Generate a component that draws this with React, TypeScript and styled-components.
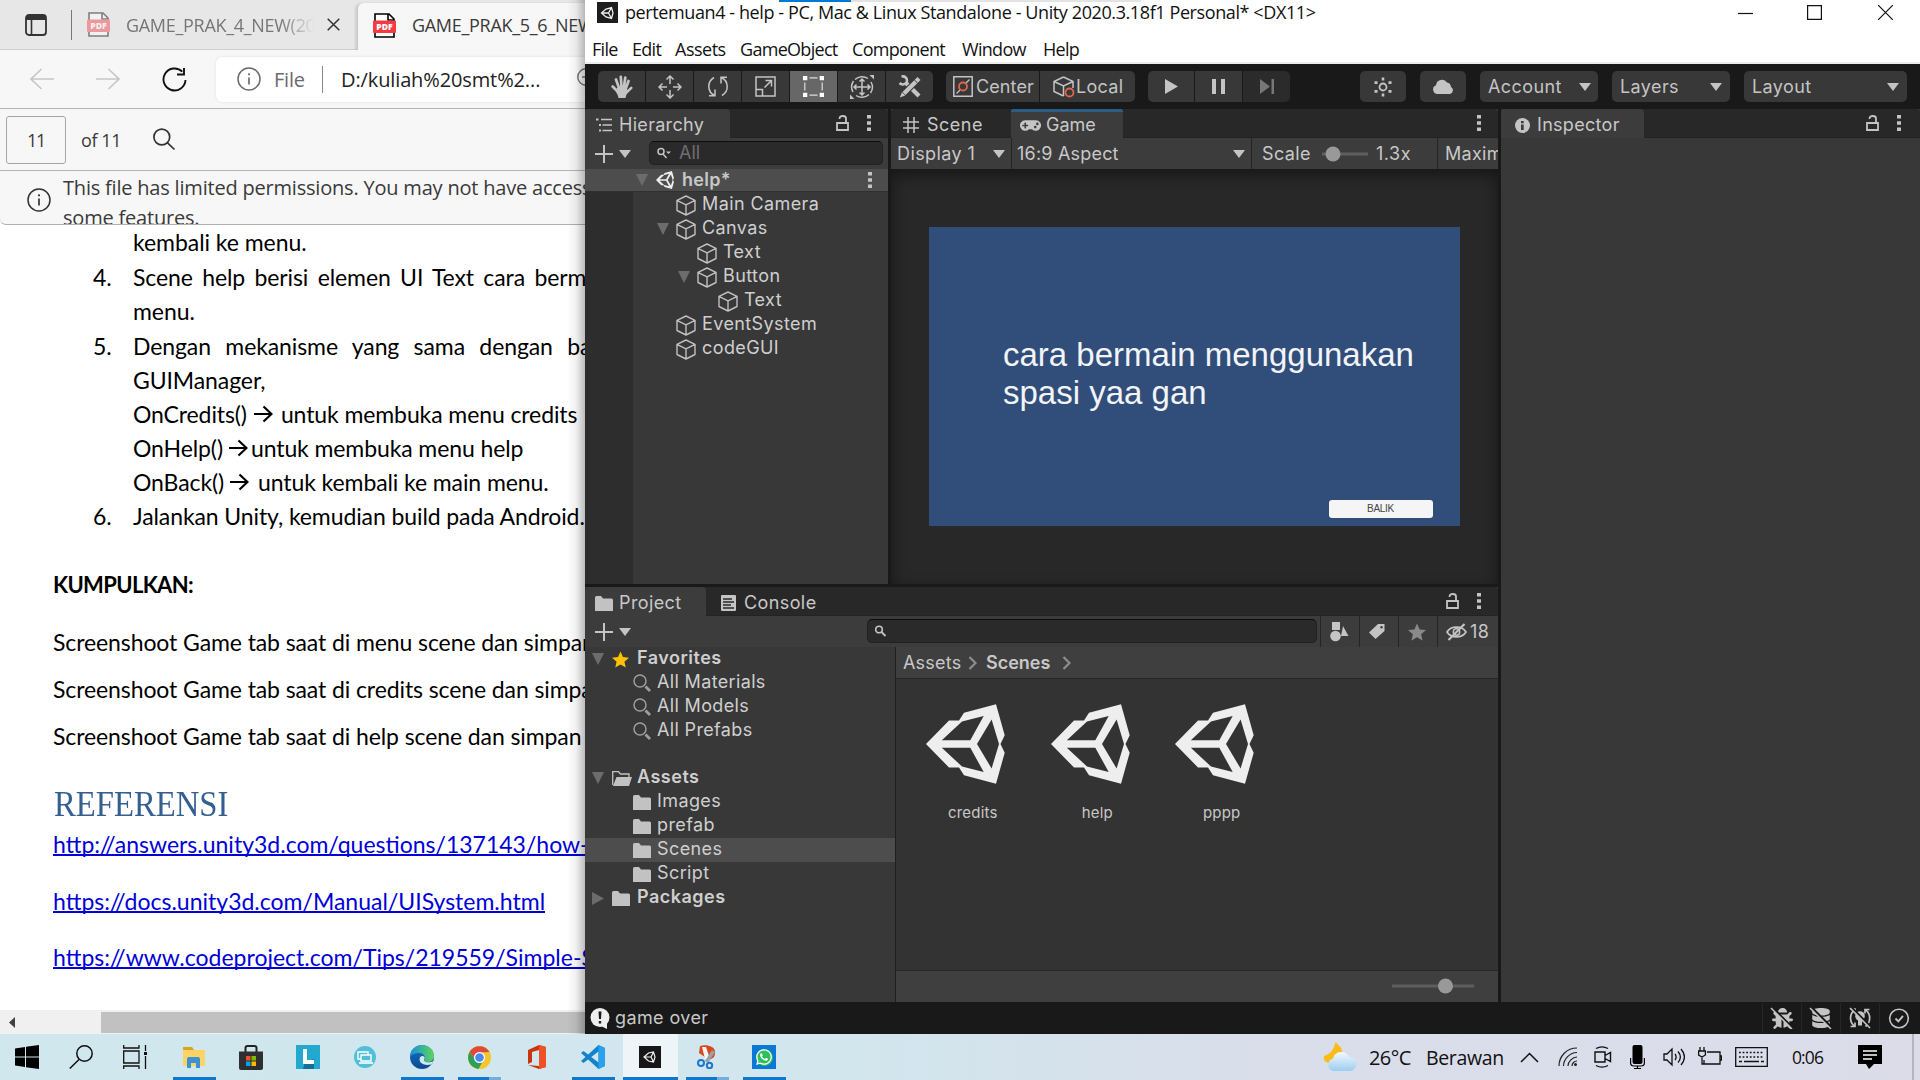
import React from "react";
import styled, { createGlobalStyle, css } from "styled-components";
import { FaBug, FaDatabase, FaGamepad, FaWhatsapp } from "react-icons/fa";

const SEGOE = '"Open Sans", "Noto Sans", sans-serif';
const INTER = 'Inter, Roboto, sans-serif';
const CALIBRI = 'Lato, "Open Sans", sans-serif';

const Global = createGlobalStyle`
  * { box-sizing: border-box; }
  html, body { margin: 0; padding: 0; background: #fff; overflow: hidden; }
  svg { display: block; flex: none; }
`;

/* ---------- shared pieces ---------- */

const Desktop = styled.div`
  width: 1920px;
  height: 1080px;
  display: grid;
  grid-template-rows: 1034px 46px;
  overflow: hidden;
`;

const Workspace = styled.div`
  display: grid;
  grid-template-columns: 585px 1335px;
  min-height: 0;
`;

const Label = styled.span<{ $w?: number; $ls?: number; $size?: number; $bold?: boolean; $ml?: number; $color?: string; $up?: number }>`
  flex: none;
  white-space: nowrap;
  display: block;
  ${(p) => p.$w !== undefined && css`width: ${p.$w}px;`}
  ${(p) => p.$size && css`font-size: ${p.$size}px;`}
  ${(p) => p.$bold && css`font-weight: 600;`}
  ${(p) => p.$color && css`color: ${p.$color};`}
  letter-spacing: ${(p) => p.$ls ?? 0}px;
  margin-left: ${(p) => p.$ml ?? 0}px;
  margin-bottom: ${(p) => p.$up ?? 0}px;
`;

const Gap = styled.i<{ $w: number }>`
  flex: none;
  width: ${(p) => p.$w}px;
`;

type GlyphProps = { w: number; h: number; vb?: string; children: React.ReactNode };
const Glyph = ({ w, h, vb, children }: GlyphProps) => (
  <svg width={w} height={h} viewBox={vb ?? `0 0 ${w} ${h}`} preserveAspectRatio="none" fill="none">
    {children}
  </svg>
);

/* ---------- browser ---------- */

const Browser = styled.section`
  display: flex;
  flex-direction: column;
  width: 585px;
  height: 1034px;
  overflow: hidden;
  background: #fff;
  font-family: ${SEGOE};
  position: relative;
  &::after {
    content: "";
    position: absolute;
    inset: 0 0 0 auto;
    width: 18px;
    background: linear-gradient(to right, rgba(0, 0, 0, 0), rgba(0, 0, 0, 0.06) 50%, rgba(0, 0, 0, 0.26));
  }
`;

const TabStrip = styled.div`
  height: 50px;
  flex: none;
  display: flex;
  background: #e7e7e7;
`;

const IdleTabs = styled.div`
  width: 357px;
  height: 50px;
  display: flex;
  align-items: center;
  padding: 0 0 0 25px;
  border-bottom: 1px solid #cfcfcf;
  color: #767676;
  font-size: 18px;
`;

const TabTitle = styled.span<{ $w: number; $fade?: boolean; $ls: number }>`
  width: ${(p) => p.$w}px;
  flex: none;
  overflow: hidden;
  white-space: nowrap;
  letter-spacing: ${(p) => p.$ls}px;
  ${(p) => p.$fade && css`mask-image: linear-gradient(to right, #000 82%, transparent);`}
`;

const ActiveTab = styled.div`
  flex: 1;
  min-width: 0;
  margin-top: 3px;
  padding: 0 0 3px 15px;
  display: flex;
  align-items: center;
  background: #f7f7f7;
  border-radius: 6px 0 0 0;
  border-left: 1px solid #c9c9c9;
  color: #3a3a3a;
  font-size: 18px;
  box-shadow: -2px 0 2px rgba(0, 0, 0, 0.1);
`;

const VLine = styled.i<{ $h: number; $ml?: number; $mr?: number; $c?: string; $w?: number }>`
  flex: none;
  width: ${(p) => p.$w ?? 1}px;
  height: ${(p) => p.$h}px;
  margin: 0 ${(p) => p.$mr ?? 0}px 0 ${(p) => p.$ml ?? 0}px;
  background: ${(p) => p.$c ?? "#777"};
`;

const NavRow = styled.div`
  height: 59px;
  flex: none;
  display: flex;
  align-items: center;
  padding-left: 30px;
  background: #f7f7f7;
  border-bottom: 1px solid #b4b4b4;
`;

const Address = styled.div`
  height: 45px;
  flex: 1;
  margin-left: 29px;
  padding-left: 21px;
  display: flex;
  align-items: center;
  background: #fff;
  border-radius: 6px 0 0 6px;
  box-shadow: 0 0 3px rgba(0, 0, 0, 0.1);
  font-size: 20px;
  color: #6b6b6b;
  overflow: hidden;
`;

const PdfBar = styled.div`
  height: 62px;
  flex: none;
  display: flex;
  align-items: center;
  padding-left: 6px;
  background: #f7f7f7;
  border-bottom: 1px solid #b4b4b4;
  font-size: 18px;
  color: #3a3a3a;
`;

const PageInput = styled.div`
  width: 60px;
  height: 48px;
  border: 1px solid #a5a5a5;
  border-radius: 3px;
  display: flex;
  align-items: center;
  justify-content: center;
  letter-spacing: -1.2px;
`;

const Notice = styled.div`
  height: 54px;
  flex: none;
  display: flex;
  align-items: flex-start;
  padding-left: 27px;
  background: #f7f7f7;
  border-bottom: 1px solid #b0b0b0;
  border-radius: 0 0 0 6px;
  overflow: hidden;
  color: #3a3a3a;
  font-size: 20px;
  line-height: 30px;
`;

const NoticeIcon = styled.div`
  flex: none;
  padding-top: 17px;
  width: 36px;
`;

const NoticeText = styled.div`
  padding-top: 2px;
  white-space: nowrap;
  letter-spacing: -0.2px;
`;

const Page = styled.article`
  flex: 1;
  min-height: 0;
  overflow: hidden;
  background: #fff;
  color: #000;
  font-family: ${CALIBRI};
  font-size: 23px;
`;

const Line = styled.div<{ $h: number; $x: number; $ls: number; $ws?: number; $bold?: boolean }>`
  height: ${(p) => p.$h}px;
  line-height: ${(p) => p.$h}px;
  padding-left: ${(p) => p.$x}px;
  display: flex;
  white-space: pre;
  letter-spacing: ${(p) => p.$ls}px;
  word-spacing: ${(p) => p.$ws ?? 0}px;
  font-weight: ${(p) => (p.$bold ? 700 : 400)};
  ${(p) => p.$bold && css`font-size: 22px;`}
`;

const ItemNumber = styled.span`
  width: 40px;
  flex: none;
`;

const ArrowMark = styled.span<{ $l: number; $r: number }>`
  display: flex;
  align-items: center;
  margin: 0 ${(p) => p.$r}px 0 ${(p) => p.$l}px;
`;

const Heading = styled.h1`
  margin: 38px 0 0 54px;
  font: 400 36px/44px "Liberation Serif", serif;
  transform: scaleX(0.908);
  transform-origin: left;
  color: #365f91;
  height: 45px;
  padding-top: 1px;
`;

const LinkRow = styled.div<{ $mt: number }>`
  height: 30px;
  margin: ${(p) => p.$mt}px 0 0 53px;
  display: flex;
`;

const Link = styled.a<{ $ls: number }>`
  color: #0000d8;
  height: 26px;
  line-height: 28px;
  white-space: nowrap;
  border-bottom: 2px solid #0000d8;
  letter-spacing: ${(p) => p.$ls}px;
`;

const ScrollBar = styled.div`
  height: 24px;
  flex: none;
  display: flex;
  align-items: center;
  background: #f0f0f0;
  padding-left: 9px;
`;

const Thumb = styled.div`
  margin-left: 86px;
  flex: 1;
  height: 21px;
  background: #c1c1c1;
`;

const PdfIcon = ({ dim }: { dim?: boolean }) => (
  <svg width="23" height="25" viewBox="0 0 23 25" opacity={dim ? 0.45 : 1}>
    <path d="M2 1h14l5 5v18H2z" fill="#fff" stroke="#000" strokeWidth="1.6" />
    <path d="M15 1v6h6" fill="none" stroke="#000" strokeWidth="1.6" />
    <rect x="0" y="7.5" width="23" height="12.5" rx="1" fill="#f23b42" />
    <text x="11.5" y="17" fontFamily="Open Sans" fontSize="8.6" fontWeight="800" fill="#fff" textAnchor="middle">PDF</text>
  </svg>
);

const InfoCircle = ({ color }: { color: string }) => (
  <Glyph w={24} h={24}>
    <circle cx="12" cy="12" r="11" stroke={color} strokeWidth="1.5" />
    <path d="M12 10.5v7" stroke={color} strokeWidth="1.7" />
    <circle cx="12" cy="7.3" r="1.1" fill={color} />
  </Glyph>
);

const DocArrow = () => (
  <Glyph w={19} h={18}>
    <path d="M0 9h17M9.5 1.5L17.5 9L9.5 16.5" stroke="#000" strokeWidth="2.2" />
  </Glyph>
);

const BrowserWindow = () => (
  <Browser>
    <TabStrip>
      <IdleTabs>
        <Glyph w={22} h={22}>
          <rect x="1" y="1" width="20" height="20" rx="3" stroke="#333" strokeWidth="1.8" />
          <path d="M1 6V4a3 3 0 0 1 3-3h14a3 3 0 0 1 3 3v2z" fill="#333" />
          <path d="M6.5 6v15" stroke="#333" strokeWidth="1.6" />
        </Glyph>
        <VLine $h={30} $ml={24} $mr={15} />
        <PdfIcon dim />
        <Gap $w={16} />
        <TabTitle $w={188} $fade $ls={-0.3}>GAME_PRAK_4_NEW(202</TabTitle>
        <Gap $w={13} />
        <Glyph w={13} h={13}><path d="M.7 .7l11.6 11.6M12.3 .7L.7 12.3" stroke="#333" strokeWidth="1.5" /></Glyph>
      </IdleTabs>
      <ActiveTab>
        <PdfIcon />
        <Gap $w={16} />
        <TabTitle $w={173} $ls={-0.3}>GAME_PRAK_5_6_NEW</TabTitle>
      </ActiveTab>
    </TabStrip>
    <NavRow>
      <Glyph w={24} h={22}><path d="M24 11H1M11.5 1L1 11l10.500 10" stroke="#c6c6c6" strokeWidth="1.6" /></Glyph>
      <Gap $w={42} />
      <Glyph w={24} h={22}><path d="M0 11h23M12.500 1L23 11L12.500 21" stroke="#c6c6c6" strokeWidth="1.6" /></Glyph>
      <Gap $w={42} />
      <Glyph w={25} h={25}>
        <path d="M23.500 13a11 11 0 1 1-3.200-8.300M22 1v6.500h-7" stroke="#111" strokeWidth="1.9" />
      </Glyph>
      <Address>
        <InfoCircle color="#6b6b6b" />
        <Label $w={48} $ml={13} $ls={-0.2}>File</Label>
        <VLine $h={27} $mr={18} $c="#888" />
        <Label $w={236} $ls={-0.12} $color="#222">D:/kuliah%20smt%2...</Label>
        <Glyph w={22} h={22}><circle cx="9" cy="9" r="8.2" stroke="#777" strokeWidth="1.5" /><path d="M5 9h8" stroke="#777" strokeWidth="1.5" /></Glyph>
      </Address>
    </NavRow>
    <PdfBar>
      <PageInput>11</PageInput>
      <Label $w={72} $ml={15} $ls={-0.4}>of 11</Label>
      <Glyph w={23} h={23}><circle cx="8.800" cy="9" r="7.900" stroke="#333" strokeWidth="1.7" /><path d="M14.300 14.600L21.500 21.500" stroke="#333" strokeWidth="1.700" /></Glyph>
    </PdfBar>
    <Notice>
      <NoticeIcon><InfoCircle color="#333" /></NoticeIcon>
      <NoticeText>
        This file has limited permissions. You may not have access to
        <br />
        some features.
      </NoticeText>
    </Notice>
    <Page>
      <Line $h={35} $x={133} $ls={-0.05}>kembali ke menu.</Line>
      <Line $h={34} $x={93} $ls={-0.1} $ws={3.6}><ItemNumber>4.</ItemNumber>Scene help berisi elemen UI Text cara bermain</Line>
      <Line $h={35} $x={133} $ls={-0.05}>menu.</Line>
      <Line $h={34} $x={93} $ls={-0.1} $ws={8.6}><ItemNumber>5.</ItemNumber>Dengan mekanisme yang sama dengan bab</Line>
      <Line $h={34} $x={133} $ls={-0.1}>GUIManager,</Line>
      <Line $h={34} $x={133} $ls={-0.1}>OnCredits()<ArrowMark $l={7} $r={8}><DocArrow /></ArrowMark>untuk membuka menu credits</Line>
      <Line $h={34} $x={133} $ls={-0.1}>OnHelp()<ArrowMark $l={6} $r={3}><DocArrow /></ArrowMark>untuk membuka menu help</Line>
      <Line $h={34} $x={133} $ls={-0.1}>OnBack()<ArrowMark $l={6} $r={9}><DocArrow /></ArrowMark>untuk kembali ke main menu.</Line>
      <Line $h={35} $x={93} $ls={-0.1}><ItemNumber>6.</ItemNumber>Jalankan Unity, kemudian build pada Android.</Line>
      <Line $h={102} $x={53} $ls={-0.65} $bold>KUMPULKAN:</Line>
      <Line $h={13} $x={53} $ls={-0.1}>Screenshoot Game tab saat di menu scene dan simpan</Line>
      <Line $h={80} $x={53} $ls={-0.1}>Screenshoot Game tab saat di credits scene dan simpan</Line>
      <Line $h={14} $x={53} $ls={-0.1}>Screenshoot Game tab saat di help scene dan simpan</Line>
      <Heading>REFERENSI</Heading>
      <LinkRow $mt={4}><Link $ls={0}>http://answers.unity3d.com/questions/137143/how-to</Link></LinkRow>
      <LinkRow $mt={27}><Link $ls={0}>https://docs.unity3d.com/Manual/UISystem.html</Link></LinkRow>
      <LinkRow $mt={26}><Link $ls={0}>https://www.codeproject.com/Tips/219559/Simple-Si</Link></LinkRow>
    </Page>
    <ScrollBar>
      <Glyph w={6} h={11}><path d="M6 0v11L0 5.500z" fill="#404040" /></Glyph>
      <Thumb />
    </ScrollBar>
  </Browser>
);

/* ---------- Unity ---------- */

const Unity = styled.section`
  display: grid;
  grid-template-rows: 62px 47px 893px 32px;
  background: #191919;
  color: #c8c8c8;
  font-family: ${INTER};
  font-size: 18px;
  line-height: 22px;
  min-width: 0;
`;

const Chrome = styled.header`
  background: #fff;
  color: #111;
  font-family: ${SEGOE};
  font-size: 18px;
  line-height: 24px;
`;

const TopEdge = styled.div`
  height: 2px;
  display: flex;
  padding-left: 194px;
`;

const EdgeBar = styled.i<{ $w: number; $c: string }>`
  width: ${(p) => p.$w}px;
  background: ${(p) => p.$c};
`;

const TitleRow = styled.div`
  height: 20px;
  display: flex;
  align-items: center;
  padding-left: 12px;
`;

const MenuRow = styled.nav`
  height: 24px;
  margin-top: 15px;
  padding-left: 7px;
  display: flex;
`;

const Toolbar = styled.div`
  border-top: 2px solid #ececec;
  padding: 7px 0 0 13px;
  display: flex;
`;

const ButtonGroup = styled.div<{ $ml?: number }>`
  height: 31px;
  display: flex;
  gap: 1px;
  margin-left: ${(p) => p.$ml ?? 0}px;
  border-radius: 5px;
  overflow: hidden;
`;

const ToolButton = styled.div<{ $w: number; $on?: boolean; $dim?: boolean; $left?: number }>`
  width: ${(p) => p.$w}px;
  height: 31px;
  display: flex;
  align-items: center;
  justify-content: ${(p) => (p.$left === undefined ? "center" : "flex-start")};
  padding-left: ${(p) => p.$left ?? 0}px;
  background: ${(p) => (p.$on ? "#676767" : p.$dim ? "#2b2b2b" : "#383838")};
  color: #c4c4c4;
`;

const Panels = styled.div`
  display: grid;
  grid-template-columns: 913px 419px;
  column-gap: 3px;
`;

const LeftColumn = styled.div`
  display: grid;
  grid-template-rows: 475px 415px;
  row-gap: 3px;
`;

const TopPair = styled.div`
  display: grid;
  grid-template-columns: 303px 607px;
  column-gap: 3px;
`;

const Panel = styled.section`
  display: flex;
  flex-direction: column;
  min-width: 0;
  min-height: 0;
  background: #383838;
  overflow: hidden;
`;

const PanelTabs = styled.div`
  height: 29px;
  flex: none;
  display: flex;
  background: #282828;
  border-radius: 4px 4px 0 0;
  border-bottom: 1px solid #232323;
`;

const PanelTab = styled.div<{ $w: number; $l: number; $active?: boolean; $focus?: boolean }>`
  width: ${(p) => p.$w}px;
  height: 29px;
  flex: none;
  display: flex;
  align-items: center;
  padding-left: ${(p) => p.$l}px;
  padding-top: ${(p) => (p.$focus ? 0 : 3)}px;
  background: ${(p) => (p.$active ? "#3c3c3c" : "transparent")};
  border-top: ${(p) => (p.$focus ? "3px solid #2c5d87" : "0")};
  border-radius: ${(p) => (p.$focus ? "2px 2px 0 0" : "4px 4px 0 0")};
`;

const TabTools = styled.div<{ $r: number }>`
  margin-left: auto;
  display: flex;
  align-items: center;
  gap: 18px;
  padding: 0 ${(p) => p.$r}px 0 0;
`;

const PanelBar = styled.div<{ $l?: number }>`
  height: 31px;
  flex: none;
  display: flex;
  align-items: center;
  padding-left: ${(p) => p.$l ?? 0}px;
  background: #3c3c3c;
`;

const SearchBox = styled.div<{ $w: number; $ml: number }>`
  width: ${(p) => p.$w}px;
  height: 24px;
  margin: 0 0 1px ${(p) => p.$ml}px;
  display: flex;
  flex: none;
  align-items: center;
  padding-left: 7px;
  background: #2a2a2a;
  border: 1px solid #212121;
  border-top-color: #0d0d0d;
  border-radius: 5px;
  color: #6f6f6f;
`;

const SceneRow = styled.div`
  height: 23px;
  flex: none;
  display: flex;
  align-items: center;
  padding-left: 51px;
  background: #4d4d4d;
  border-bottom: 1px solid #303030;
`;

const HierarchyBody = styled.div`
  flex: 1;
  padding-left: 48px;
  background: #2d2d2d;
`;

const Tree = styled.div`
  height: 100%;
  background: #383838;
  padding-top: 1px;
`;

const TreeRow = styled.div<{ $l: number; $sel?: boolean }>`
  height: 24px;
  display: flex;
  align-items: center;
  padding-left: ${(p) => p.$l}px;
  background: ${(p) => (p.$sel ? "#4d4d4d" : "transparent")};
  color: #cfcfcf;
`;

const TreeSpacer = styled.div`
  height: 23px;
`;

const Slot = styled.span<{ $w: number }>`
  width: ${(p) => p.$w}px;
  flex: none;
  display: flex;
  align-items: center;
`;

const GameView = styled.div`
  flex: 1;
  padding: 58px 0 0 38px;
  background: #282828;
  box-shadow: inset 0 6px 16px rgba(0, 0, 0, 0.45);
`;

const Stage = styled.div`
  width: 531px;
  height: 299px;
  display: flex;
  flex-direction: column;
  justify-content: space-between;
  padding: 109px 27px 8px 74px;
  background: #314d79;
`;

const StageText = styled.p`
  margin: 0;
  font: 400 33px/38px "Liberation Sans", Arial, sans-serif;
  color: #f2f4f8;
  white-space: nowrap;
`;

const StageButton = styled.div`
  width: 104px;
  height: 18px;
  align-self: flex-end;
  display: flex;
  align-items: center;
  justify-content: center;
  border-radius: 3px;
  background: #f5f5f5;
  color: #444;
  font: 400 10px/12px "Liberation Sans", Arial, sans-serif;
  letter-spacing: -0.3px;
  padding-right: 1px;
`;

const ProjectBody = styled.div`
  flex: 1;
  display: grid;
  grid-template-columns: 310px 602px;
  min-height: 0;
`;

const Browse = styled.div`
  border-left: 1px solid #1f1f1f;
  display: grid;
  grid-template-rows: 32px 292px 31px;
  background: #333;
  width: 603px;
`;

const Crumbs = styled.div`
  display: flex;
  align-items: center;
  padding-left: 7px;
  background: #3f3f3f;
  border-bottom: 1px solid #262626;
`;

const Assets = styled.div`
  display: flex;
  gap: 45px;
  padding: 25px 0 0 30px;
  border-bottom: 1px solid #272727;
`;

const Asset = styled.div`
  width: 79.500px;
  font-size: 15px;
  line-height: 18px;
  text-align: center;
`;

const AssetName = styled.div`
  margin-top: 20px;
  padding-left: 14px;
  letter-spacing: 0.2px;
`;

const ZoomFooter = styled.div`
  display: flex;
  align-items: center;
  justify-content: flex-end;
  padding: 0 24px 2px 0;
  background: #3f3f3f;
`;

const StatusBar = styled.footer`
  display: flex;
  align-items: center;
  padding-left: 5px;
  background: #191919;
`;

const StatusIcon = styled.div`
  width: 39px;
  height: 30px;
  display: flex;
  align-items: center;
  justify-content: center;
  border-left: 1px solid #262626;
  color: #c4c4c4;
  position: relative;
`;

const Slash = styled.svg`
  position: absolute;
  left: 7px;
  top: 4px;
`;

const UnityMark = ({ w, h, color = "#eee" }: { w: number; h: number; color?: string }) => (
  <Glyph w={w} h={h} vb="0 0 79 80">
    <path
      fill={color}
      fillRule="evenodd"
      d="M0 40L23 16.500H33L38 8.700L70 .3L78.700 31.300L74.500 40L78.700 48.700L70 79.700L38 71.300L33 63.500H23zM15.800 36.300H44.300L57.700 12L36 17.500zM15.800 43.700L36 62.500L57.700 68L44.300 43.700zM51 40L65.600 64.500L73 40L65.600 15.500z"
    />
  </Glyph>
);

const TitleIcon = () => (
  <Glyph w={21} h={21}>
    <rect width="21" height="21" fill="#1d1d1d" />
    <path d="M4.500 11L9 7L14.500 5.500L16 11L14.500 16.500L9 15zM4.500 11H11.500M11.500 11L14.500 5.500M11.500 11L14.500 16.500" stroke="#eee" strokeWidth="1.300" />
  </Glyph>
);

const Cube = () => (
  <Glyph w={20} h={21}>
    <path d="M10 1L19 5.300V15.500L10 20L1 15.500V5.300zM1 5.300L10 9.800L19 5.300M10 9.800V20" stroke="#c0c0c0" strokeWidth="1.400" strokeLinejoin="round" />
  </Glyph>
);

const Caret = ({ color = "#c4c4c4" }: { color?: string }) => (
  <Glyph w={12} h={8}><path d="M0 0H12L6 8z" fill={color} /></Glyph>
);
const Fold = () => (
  <Glyph w={12} h={12}><path d="M0 0H12L6 12z" fill="#6c6c6c" /></Glyph>
);
const FoldRight = () => (
  <Glyph w={12} h={13}><path d="M0 0V13L12 6.500z" fill="#6c6c6c" /></Glyph>
);
const Kebab = () => (
  <Glyph w={4} h={16}><path d="M0 0h4v3.600H0zM0 6.200h4v3.600H0zM0 12.400h4V16H0z" fill="#c4c4c4" /></Glyph>
);
const Lock = () => (
  <Glyph w={13} h={16}><path d="M1 8h11v7H1zM10 8V3.500C10 1.500 9 1 7 1S3.500 1.500 3.500 4" stroke="#c4c4c4" strokeWidth="1.800" /></Glyph>
);
const Plus = () => (
  <Glyph w={18} h={18}><path d="M9 0v18M0 9h18" stroke="#c4c4c4" strokeWidth="2" /></Glyph>
);
const Folder = () => (
  <Glyph w={18} h={15}><path d="M0 1.500A1.500 1.500 0 0 1 1.500 0H6L8 2.500H16.500A1.500 1.500 0 0 1 18 4V15H0z" fill="#c2c2c2" /></Glyph>
);
const FolderOpen = () => (
  <Glyph w={20} h={15}>
    <path d="M.7 14V.7H6.500L8.500 3H17V6" stroke="#c2c2c2" strokeWidth="1.300" />
    <path d="M4.500 6H20L17 15H1z" fill="#c2c2c2" />
  </Glyph>
);
const Lens = () => (
  <Glyph w={18} h={18}>
    <circle cx="7" cy="7" r="6" stroke="#9d9d9d" strokeWidth="1.500" />
    <path d="M12.500 12.500L17 17" stroke="#9d9d9d" strokeWidth="2.800" />
  </Glyph>
);
const Star = ({ size, color }: { size: number; color: string }) => (
  <Glyph w={size} h={size} vb="0 0 20 20"><path d="M10 .5L12.900 7.200L20 7.800L14.600 12.500L16.200 19.500L10 15.800L3.800 19.500L5.400 12.500L0 7.800L7.100 7.200z" fill={color} /></Glyph>
);
const SmallLens = () => (
  <Glyph w={12} h={12}><circle cx="4" cy="4.500" r="3.300" stroke="#c4c4c4" strokeWidth="1.600" /><path d="M6.500 7l4 4" stroke="#c4c4c4" strokeWidth="1.800" /></Glyph>
);
const Chevron = () => (
  <Glyph w={9} h={14}><path d="M1.500 1L7.500 7L1.500 13" stroke="#8d8d8d" strokeWidth="2.200" /></Glyph>
);

const ink = "#c4c4c4";

const toolIcons = [
  <Glyph w={22} h={23}>
    <path d="M6 13L10 11H14.500L16.500 15C16 18 15.500 19 14.500 23H7.500C7 20 6 19 5 16.500z" fill={ink} />
    <path d="M7 17L1.700 11.500M8 13L5 4.500M10.500 12L9.800 1.800M13 12L14.300 2.500M15 13L17.500 6" stroke={ink} strokeWidth="2.700" strokeLinecap="round" />
    <path d="M14.500 18.500L20.300 12.800" stroke={ink} strokeWidth="2.500" strokeLinecap="round" />
  </Glyph>,
  <Glyph w={24} h={24}>
    <path d="M12 1V9M12 15V23M1 12H9M15 12H23M8.500 4.500L12 1L15.500 4.500M8.500 19.500L12 23L15.500 19.500M4.500 8.500L1 12L4.500 15.500M19.500 8.500L23 12L19.500 15.500" stroke={ink} strokeWidth="1.500" />
  </Glyph>,
  <Glyph w={22} h={21}>
    <path d="M7.500 19.500C.5 16 -.5 6 7 1.500M2 19.800H8V13.500M14.500 1.500C21.500 5 22.500 15 15 19.500M20 1.200H14V7.500" stroke={ink} strokeWidth="1.500" />
  </Glyph>,
  <Glyph w={21} h={21}>
    <path d="M1 1H20V20H1zM1 13.500H7.500V20M9.500 11.500L16 5M10.500 4.500H16.500V10.500" stroke={ink} strokeWidth="1.500" />
  </Glyph>,
  <Glyph w={21} h={21}>
    <path d="M6.500 1.800H14.500M6.500 19.200H14.500M1.800 6.500V14.500M19.200 6.500V14.500" stroke="#ddd" strokeWidth="1.200" />
    <path d="M0 0h4.300v4.300H0zM16.700 0H21v4.300h-4.300zM0 16.700h4.300V21H0zM16.700 16.700H21V21h-4.300z" fill="#fff" />
  </Glyph>,
  <Glyph w={24} h={24}>
    <path d="M12 4V20M4 12H20M9.500 6.500L12 4L14.500 6.500M9.500 17.500L12 20L14.500 17.500M6.500 9.500L4 12L6.500 14.500M17.500 9.500L20 12L17.500 14.500" stroke={ink} strokeWidth="1.500" />
    <path d="M18 3.500A10.500 10.500 0 0 0 5 4.500M3.500 6A10.500 10.500 0 0 0 3 17M6 20.500A10.500 10.500 0 0 0 19 19.500M20.500 18A10.500 10.500 0 0 0 21 7" stroke={ink} strokeWidth="1.500" />
    <path d="M19.500 0H24V4.500zM0 19.500V24H4.500z" fill={ink} />
  </Glyph>,
  <Glyph w={23} h={23}>
    <path d="M8 8L21 21" stroke={ink} strokeWidth="4.200" />
    <path d="M3.500 1.500C7 .8 9.500 3 8.800 6.500C8 9.500 4 10.500 1.500 8" stroke={ink} strokeWidth="2.600" />
    <path d="M22 2.500L4.500 20" stroke="#383838" strokeWidth="6.500" />
    <path d="M21 3.500L6 18.500" stroke={ink} strokeWidth="4.200" strokeLinecap="butt" />
    <path d="M4 17.200L7.300 20.500L1.800 22.500z" fill={ink} />
    <path d="M16.200 4.800L19.800 8.400" stroke="#383838" strokeWidth="1" />
  </Glyph>,
];

const menuItems: [string, number, number][] = [
  ["File", 40, -0.7],
  ["Edit", 43, -0.7],
  ["Assets", 65, -0.5],
  ["GameObject", 112, -0.7],
  ["Component", 110, -0.7],
  ["Window", 81, -0.7],
  ["Help", 50, -0.7],
];

const hierarchy: { name: string; depth: number; open?: boolean }[] = [
  { name: "Main Camera", depth: 0 },
  { name: "Canvas", depth: 0, open: true },
  { name: "Text", depth: 1 },
  { name: "Button", depth: 1, open: true },
  { name: "Text", depth: 2 },
  { name: "EventSystem", depth: 0 },
  { name: "codeGUI", depth: 0 },
];

const UnityWindow = () => (
  <Unity>
    <Chrome>
      <TopEdge><EdgeBar $w={72} $c="#0078d7" /><EdgeBar $w={290} $c="#e3e3e3" /></TopEdge>
      <TitleRow>
        <TitleIcon />
        <Gap $w={7} />
        <Label $w={1113} $ls={-0.4}>pertemuan4 - help - PC, Mac &amp; Linux Standalone - Unity 2020.3.18f1 Personal* &lt;DX11&gt;</Label>
        <Glyph w={15} h={15}><path d="M0 8.500H15" stroke="#111" strokeWidth="1.200" /></Glyph>
        <Gap $w={54} />
        <Glyph w={15} h={15}><path d="M.6 .6H14.400V14.400H.6z" stroke="#111" strokeWidth="1.200" /></Glyph>
        <Gap $w={56} />
        <Glyph w={15} h={15}><path d="M0 0L15 15M15 0L0 15" stroke="#111" strokeWidth="1.200" /></Glyph>
      </TitleRow>
      <MenuRow>
        {menuItems.map(([name, w, ls]) => <Label key={name} $w={w} $ls={ls}>{name}</Label>)}
      </MenuRow>
    </Chrome>
    <Toolbar>
      <ButtonGroup>
        {toolIcons.map((icon, i) => <ToolButton key={i} $w={47} $on={i === 4}>{icon}</ToolButton>)}
      </ButtonGroup>
      <ButtonGroup $ml={13}>
        <ToolButton $w={93} $left={7}>
          <Glyph w={20} h={21}>
            <path d="M.8 .8H19.200V20.200H.8z" stroke={ink} strokeWidth="1.500" />
            <path d="M3.500 17.500L7 14M13 7L16.500 3.500" stroke={ink} strokeWidth="1.300" />
            <circle cx="10" cy="10.500" r="4" stroke="#e0664a" strokeWidth="1.800" />
          </Glyph>
          <Label $ml={3} $ls={0.1}>Center</Label>
        </ToolButton>
        <ToolButton $w={95} $left={13}>
          <Glyph w={22} h={22}>
            <path d="M10.500 1L20 5.500V12M10.500 20L1 15.500V5.500L10.500 1M1 5.500L10.500 10L20 5.500M10.500 10V20" stroke={ink} strokeWidth="1.500" />
            <circle cx="16.500" cy="16.500" r="4" fill="#383838" stroke="#e0664a" strokeWidth="1.800" />
          </Glyph>
          <Label $ml={1} $ls={0.3}>Local</Label>
        </ToolButton>
      </ButtonGroup>
      <ButtonGroup $ml={13}>
        <ToolButton $w={46}><Glyph w={13} h={15}><path d="M0 0L13 7.500L0 15z" fill={ink} /></Glyph></ToolButton>
        <ToolButton $w={47}><Glyph w={13} h={15}><path d="M0 0h4v15H0zM9 0h4v15H9z" fill={ink} /></Glyph></ToolButton>
        <ToolButton $w={47} $dim><Glyph w={14} h={15}><path d="M0 0L10 7.500L0 15zM11.500 0H14V15H11.500z" fill="#777" /></Glyph></ToolButton>
      </ButtonGroup>
      <ButtonGroup $ml={70}>
        <ToolButton $w={46}>
          <Glyph w={18} h={20}>
            <circle cx="9" cy="10" r="3.500" stroke={ink} strokeWidth="1.800" />
            <path d="M7.700 .5h2.600v3H7.700zM7.700 16.500h2.600v3H7.700zM.5 4.300h3V7h-3zM14.500 4.300h3V7h-3zM.5 13h3v2.700h-3zM14.500 13h3v2.700h-3z" fill={ink} />
          </Glyph>
        </ToolButton>
      </ButtonGroup>
      <ButtonGroup $ml={14}>
        <ToolButton $w={46}>
          <Glyph w={21} h={15}><path d="M4.500 15A4.500 4.500 0 0 1 3 6.300A6 6 0 0 1 14 3.500A5 5 0 0 1 18 8A3.800 3.800 0 0 1 17 15z" fill={ink} /></Glyph>
        </ToolButton>
      </ButtonGroup>
      {([["Account", 118, 14, 91], ["Layers", 118, 14, 90], ["Layout", 163, 14, 135]] as const).map(([name, w, ml, lw]) => (
        <ButtonGroup key={name} $ml={ml}>
          <ToolButton $w={w} $left={8}><Label $w={lw} $ls={0.4}>{name}</Label><Caret /></ToolButton>
        </ButtonGroup>
      ))}
    </Toolbar>

    <Panels>
      <LeftColumn>
        <TopPair>
          <Panel>
            <PanelTabs>
              <PanelTab $w={145} $l={11} $active>
                <Glyph w={16} h={14}><path d="M5 1.500H16M6.500 7H16M6.500 12.500H16" stroke={ink} strokeWidth="1.500" /><path d="M0 .5h2.500v2H0zM3 6h2v2H3zM3 11.500h2v2H3z" fill={ink} /></Glyph>
                <Label $ml={7} $ls={0.3}>Hierarchy</Label>
              </PanelTab>
              <TabTools $r={17}><Lock /><Kebab /></TabTools>
            </PanelTabs>
            <PanelBar $l={10}>
              <Plus /><Gap $w={6} /><Caret />
              <SearchBox $w={234} $ml={18}>
                <Glyph w={14} h={12}><circle cx="4" cy="4.500" r="3" stroke={ink} strokeWidth="1.500" /><path d="M6 7l3.500 4" stroke={ink} strokeWidth="1.500" /><path d="M9 4.500h5L11.500 7z" fill={ink} /></Glyph>
                <Label $ml={8}>All</Label>
              </SearchBox>
            </PanelBar>
            <SceneRow>
              <Slot $w={20}><Fold /></Slot>
              <UnityMark w={18} h={18} />
              <Label $w={186} $ml={8} $bold $ls={0.3}>help*</Label>
              <Kebab />
            </SceneRow>
            <HierarchyBody>
              <Tree>
                {hierarchy.map((n, i) => (
                  <TreeRow key={i} $l={24 + n.depth * 21}>
                    <Slot $w={19}>{n.open && <Fold />}</Slot>
                    <Cube />
                    <Label $ml={6} $ls={0.4} $up={2}>{n.name}</Label>
                  </TreeRow>
                ))}
              </Tree>
            </HierarchyBody>
          </Panel>

          <Panel>
            <PanelTabs>
              <PanelTab $w={120} $l={12}>
                <Glyph w={16} h={16}><path d="M5 0V16M11 0V16M0 5H16M0 11H16" stroke={ink} strokeWidth="1.500" /></Glyph>
                <Label $ml={8} $ls={0.5}>Scene</Label>
              </PanelTab>
              <PanelTab $w={112} $l={9} $active $focus>
                <FaGamepad size={21} color={ink} />
                <Label $ml={5} $ls={0}>Game</Label>
              </PanelTab>
              <TabTools $r={17}><Kebab /></TabTools>
            </PanelTabs>
            <PanelBar $l={6}>
              <Label $w={96} $ls={0.4}>Display 1</Label><Caret />
              <VLine $h={31} $ml={6} $mr={5} $c="#252525" />
              <Label $w={216} $ls={0.2}>16:9 Aspect</Label><Caret />
              <VLine $h={31} $ml={6} $mr={10} $c="#252525" />
              <Label $w={60} $ls={0.4}>Scale</Label>
              <Glyph w={46} h={16}><path d="M0 8H46" stroke="#5e5e5e" strokeWidth="3" /><circle cx="11" cy="8" r="7.500" fill="#999" /></Glyph>
              <Label $w={61} $ml={8} $ls={0.5}>1.3x</Label>
              <VLine $h={31} $mr={7} $c="#252525" />
              <Label $ls={0.3}>Maximize On Play</Label>
            </PanelBar>
            <GameView>
              <Stage>
                <StageText>cara bermain menggunakan<br />spasi yaa gan</StageText>
                <StageButton>BALIK</StageButton>
              </Stage>
            </GameView>
          </Panel>
        </TopPair>

        <Panel>
          <PanelTabs>
            <PanelTab $w={121} $l={10} $active><Folder /><Label $ml={6} $ls={0.4}>Project</Label></PanelTab>
            <PanelTab $w={140} $l={15}>
              <Glyph w={15} h={16}><rect width="15" height="16" rx="1" fill={ink} /><path d="M2 4h9M2 7h11M2 10h8M2 13h11" stroke="#282828" strokeWidth="1.300" /></Glyph>
              <Label $ml={8} $ls={0.4}>Console</Label>
            </PanelTab>
            <TabTools $r={17}><Lock /><Kebab /></TabTools>
          </PanelTabs>
          <PanelBar $l={10}>
            <Plus /><Gap $w={6} /><Caret />
            <SearchBox $w={450} $ml={236}><SmallLens /></SearchBox>
            <VLine $h={31} $ml={3} $c="#252525" />
            <Slot $w={38}>
              <Gap $w={9} />
              <Glyph w={19} h={20}><path d="M2 0h8v8H2zM13 4L18.500 14H11z" fill={ink} /><circle cx="5.500" cy="14" r="5.300" fill={ink} /></Glyph>
            </Slot>
            <VLine $h={31} $c="#252525" />
            <Slot $w={38}>
              <Gap $w={9} />
              <Glyph w={16} h={15}><path d="M9 0H15.500V7L6.500 15L0 8.500z" fill={ink} /><circle cx="12.500" cy="3.300" r="1.200" fill="#3c3c3c" /></Glyph>
            </Slot>
            <VLine $h={31} $c="#252525" />
            <Slot $w={38}><Gap $w={9} /><Star size={18} color="#8a8a8a" /></Slot>
            <VLine $h={31} $c="#252525" />
            <Gap $w={8} />
            <Glyph w={21} h={18}>
              <path d="M1 9C5 2.500 16 2.500 20 9C16 15.500 5 15.500 1 9z" stroke={ink} strokeWidth="1.700" />
              <circle cx="10.500" cy="9" r="3.200" stroke={ink} strokeWidth="1.500" />
              <path d="M2.500 17L18.500 1" stroke={ink} strokeWidth="2.200" />
            </Glyph>
            <Label $ml={3} $ls={0.4}>18</Label>
          </PanelBar>
          <ProjectBody>
            <div>
              <TreeRow $l={7}><Slot $w={20}><Fold /></Slot><Slot $w={25}><Star size={17} color="#ffc107" /></Slot><Label $bold $ls={0.5} $up={2}>Favorites</Label></TreeRow>
              {["All Materials", "All Models", "All Prefabs"].map((n) => (
                <TreeRow key={n} $l={48}><Slot $w={24}><Lens /></Slot><Label $ls={0.35} $up={2}>{n}</Label></TreeRow>
              ))}
              <TreeSpacer />
              <TreeRow $l={7}><Slot $w={20}><Fold /></Slot><Slot $w={25}><FolderOpen /></Slot><Label $bold $ls={0.5} $up={2}>Assets</Label></TreeRow>
              {["Images", "prefab", "Scenes", "Script"].map((n) => (
                <TreeRow key={n} $l={48} $sel={n === "Scenes"}><Slot $w={24}><Folder /></Slot><Label $ls={0.4} $up={2}>{n}</Label></TreeRow>
              ))}
              <TreeRow $l={7}><Slot $w={20}><FoldRight /></Slot><Slot $w={25}><Folder /></Slot><Label $bold $ls={0.5} $up={2}>Packages</Label></TreeRow>
            </div>
            <Browse>
              <Crumbs>
                <Label $w={65} $ls={0.2}>Assets</Label><Chevron />
                <Label $w={76} $ml={9} $bold>Scenes</Label><Chevron />
              </Crumbs>
              <Assets>
                {["credits", "help", "pppp"].map((n) => (
                  <Asset key={n}><UnityMark w={79} h={80} /><AssetName>{n}</AssetName></Asset>
                ))}
              </Assets>
              <ZoomFooter>
                <Glyph w={82} h={16}><path d="M0 8H82" stroke="#5e5e5e" strokeWidth="3" /><circle cx="53.500" cy="8" r="7.500" fill="#999" /></Glyph>
              </ZoomFooter>
            </Browse>
          </ProjectBody>
        </Panel>
      </LeftColumn>

      <Panel>
        <PanelTabs>
          <PanelTab $w={143} $l={14} $active>
            <Glyph w={15} h={15}><circle cx="7.500" cy="7.500" r="7.500" fill={ink} /><path d="M6 6.500h2.700V12H6z M6 3h2.700v2.200H6z" fill="#3c3c3c" /></Glyph>
            <Label $ml={7} $ls={0.3}>Inspector</Label>
          </PanelTab>
          <TabTools $r={19}><Lock /><Kebab /></TabTools>
        </PanelTabs>
      </Panel>
    </Panels>

    <StatusBar>
      <Glyph w={20} h={21}>
        <circle cx="10" cy="9.500" r="9.500" fill="#eee" />
        <path d="M9 17L17 21V12z" fill="#eee" />
        <path d="M8.500 3.500h3L11 11H9zM8.800 13h2.400v2.400H8.800z" fill="#191919" />
      </Glyph>
      <Label $w={1147} $ml={5} $ls={0.4}>game over</Label>
      <StatusIcon><FaBug size={21} /><Slash width="24" height="22"><path d="M2 0L23 21" stroke="#191919" strokeWidth="2" /><path d="M1 1L22 22" stroke={ink} strokeWidth="1.500" /></Slash></StatusIcon>
      <StatusIcon><FaDatabase size={20} /><Slash width="24" height="22"><path d="M2 0L23 21" stroke="#191919" strokeWidth="2.500" /><path d="M1 1L22 22" stroke={ink} strokeWidth="1.500" /></Slash></StatusIcon>
      <StatusIcon>
        <Glyph w={22} h={22}>
          <path d="M6 2.500A10.500 10.500 0 0 0 5 18.800M1.500 19.500H6V15.500M1.500 2H6V6M16.500 19.500A10.500 10.500 0 0 0 17 3.200M20.500 2.500H16V6.500" stroke={ink} strokeWidth="1.700" />
          <circle cx="11" cy="9" r="4.800" fill={ink} /><path d="M9 13h4v5.500H9z" fill={ink} />
          <path d="M2 0L23 21" stroke="#191919" strokeWidth="2.200" /><path d="M1 1L21 21" stroke={ink} strokeWidth="1.600" />
        </Glyph>
      </StatusIcon>
      <StatusIcon>
        <Glyph w={22} h={21}><circle cx="11" cy="10.500" r="9.300" stroke={ink} strokeWidth="1.600" /><path d="M7.500 10.500L10.300 13.300L15 8" stroke={ink} strokeWidth="1.900" /></Glyph>
      </StatusIcon>
    </StatusBar>
  </Unity>
);

/* ---------- taskbar ---------- */

const Bar = styled.footer`
  display: flex;
  background: linear-gradient(90deg, #d0e7ee 0%, #d2e6ee 45%, #d8deea 65%, #dcdce9 100%);
  font-family: ${SEGOE};
  color: #111;
`;

const SystemButton = styled.div`
  width: 54px;
  height: 46px;
  display: flex;
  align-items: center;
  justify-content: center;
`;

const AppGroup = styled.div`
  display: flex;
  margin-left: 4px;
`;

const AppSlot = styled.div<{ $state?: "run" | "multi" | "active" }>`
  width: 57px;
  height: 46px;
  padding: 0 1px;
  display: flex;
  flex-direction: column;
  align-items: center;
  background: ${(p) => (p.$state === "active" ? "linear-gradient(#edf5f8, #edf5f8) center / 55px 100% no-repeat" : "none")};
  &::after {
    content: "";
    height: 3px;
    width: ${(p) => (p.$state === "active" ? 55 : p.$state ? 43 : 0)}px;
    background: ${(p) => (p.$state === "multi" ? "linear-gradient(90deg, #0f78cc 31px, #73aedd 31px)" : "#0f78cc")};
  }
`;

const AppIcon = styled.div`
  height: 43px;
  padding: 3px 1px 0 0;
  display: flex;
  align-items: center;
`;

const WhatsTile = styled.div`
  width: 24px;
  height: 24px;
  display: flex;
  align-items: center;
  justify-content: center;
  background: #0a78d6;
  color: #fff;
`;

const WhatsBubble = styled.div`
  width: 17px;
  height: 17px;
  display: flex;
  align-items: center;
  justify-content: center;
  background: #2bc05b;
  border-radius: 50%;
`;

const Tray = styled.div`
  margin-left: auto;
  display: flex;
  align-items: center;
  width: 597px;
  height: 46px;
`;

const apps: { icon: React.ReactNode; state?: "run" | "multi" | "active" }[] = [
  {
    state: "run",
    icon: <Glyph w={24} h={22}><path d="M1 1h9l2 3h-11z" fill="#d9a520" /><path d="M1 4h22v16H1z" fill="#fcd364" /><path d="M5 22V13a2 2 0 0 1 2-2h9a2 2 0 0 1 2 2v9h-4v-5h-5v5z" fill="#3b93d6" /></Glyph>,
  },
  {
    icon: <Glyph w={24} h={25}><path d="M6.500 7V3A2 2 0 0 1 8.500 1H15.500A2 2 0 0 1 17.500 3V7" stroke="#222" strokeWidth="2" /><path d="M0 6.500h24V23a2 2 0 0 1-2 2H2a2 2 0 0 1-2-2z" fill="#2f2f2f" /><path d="M7 11h4.500v4.500H7z" fill="#f25022" /><path d="M12.500 11H17v4.500h-4.500z" fill="#7fba00" /><path d="M7 16.500h4.500V21H7z" fill="#00a4ef" /><path d="M12.500 16.500H17V21h-4.500z" fill="#ffb900" /></Glyph>,
  },
  {
    icon: <Glyph w={24} h={24}><path d="M0 0h24v24H0z" fill="#23a9d0" /><path d="M9 17L18 14V24H7z" fill="#136f94" /><path d="M7 4h4v11h7v4H7z" fill="#fff" /></Glyph>,
  },
  {
    icon: <Glyph w={22} h={22}><circle cx="11" cy="11" r="11" fill="#52bfd9" /><path d="M4 6h10v7H4z" stroke="#fff" strokeWidth="1.400" /><path d="M7 9h10v6H7z" fill="#52bfd9" stroke="#fff" strokeWidth="1.400" /><path d="M5 17h14" stroke="#fff" strokeWidth="1.600" /></Glyph>,
  },
  {
    state: "run",
    icon: (
      <Glyph w={24} h={24}>
        <defs>
          <linearGradient id="edgeTop" x1="0" y1="0" x2="1" y2="0"><stop offset="0" stopColor="#1b8fd8" /><stop offset="1" stopColor="#5cd65a" /></linearGradient>
          <linearGradient id="edgeLow" x1="0" y1="0" x2="0" y2="1"><stop offset="0" stopColor="#1273c8" /><stop offset="1" stopColor="#0c4a91" /></linearGradient>
        </defs>
        <circle cx="12" cy="12" r="12" fill="url(#edgeLow)" />
        <path d="M0 11C1 4 6 0 12 0C19 0 24 5 24 11C24 15 21 17 18 17C15 17 13.500 16 14.500 14C16 11 13 8 9 8C5 8 2 9 0 12z" fill="url(#edgeTop)" />
        <path d="M10 12.500C8 17 13 21.500 21.500 19.500L23.500 16C20 18 15 17.500 14 15.500C13.500 14.500 15 13.500 14.500 12C13.500 10.500 11 10.500 10 12.500z" fill="#d3e7ee" />
      </Glyph>
    ),
  },
  {
    state: "multi",
    icon: <Glyph w={23} h={23}><circle cx="11.500" cy="11.500" r="11.500" fill="#f5c52c" /><path d="M1.500 6A11.500 11.500 0 0 1 21.500 6L11.500 6.500L8 14z" fill="#dd4b3e" /><path d="M1.500 6A11.500 11.500 0 0 0 10.500 23L15.500 14L7 13z" fill="#2f9e57" /><circle cx="11.500" cy="11.500" r="5.500" fill="#fff" /><circle cx="11.500" cy="11.500" r="4.300" fill="#4a87ee" /></Glyph>,
  },
  {
    icon: <Glyph w={19} h={24}><path d="M12 0L19 2V22L12 24L1 20L12 21V5L5 7V17L1 19V5z" fill="#c8360f" /><path d="M12 0L19 2V22L12 24z" fill="#ee5126" /></Glyph>,
  },
  {
    state: "run",
    icon: <Glyph w={24} h={24}><path d="M17.500 0L24 3V21L17.500 24L2 9.800L0 8L2.500 6L17.500 17.500V6.500L2.500 18L0 16L2 14.200z" fill="#1583cc" /><path d="M17.500 0L24 3V21L17.500 24z" fill="#2ba1ee" /></Glyph>,
  },
  {
    state: "active",
    icon: <Glyph w={22} h={22}><path d="M0 0h22v22H0z" fill="#161616" /><path d="M5 11L9.500 7L14.500 6L16 11L14.500 16L9.500 15zM5 11H12M12 11L14.500 6M12 11L14.500 16" stroke="#eee" strokeWidth="1.200" /></Glyph>,
  },
  {
    state: "multi",
    icon: <Glyph w={20} h={24}><path d="M3 1C9-1 19 1 18 8C18 13 14 15 11 14L2 8z" fill="#d9481c" /><path d="M5 2L9 2L13 14H8z" fill="#f4f4f4" /><path d="M16.500 6L9.500 17" stroke="#9aa1a8" strokeWidth="3.600" /><circle cx="4" cy="18" r="3" stroke="#1976d2" strokeWidth="2" /><circle cx="12.500" cy="20.500" r="2.700" stroke="#1976d2" strokeWidth="2" /></Glyph>,
  },
  { state: "run", icon: <WhatsTile><WhatsBubble><FaWhatsapp size={18} /></WhatsBubble></WhatsTile> },
];

const Taskbar = () => (
  <Bar>
    <SystemButton><Glyph w={24} h={24}><path d="M0 3.500L10 2V11.500H0zM11 1.800L24 0V11.500H11zM0 12.500H10V22L0 20.500zM11 12.500H24V24L11 22.200z" fill="#000" /></Glyph></SystemButton>
    <SystemButton><Glyph w={24} h={24}><circle cx="15.500" cy="8.500" r="7.700" stroke="#111" strokeWidth="1.500" /><path d="M10 14.500L.8 23.500" stroke="#111" strokeWidth="1.500" /></Glyph></SystemButton>
    <SystemButton><Glyph w={24} h={24}><path d="M.7 6H16V18H.7zM.7 0V3H16V0M.7 24V21H16V24M22.500 0V6M22.500 11V24" stroke="#111" strokeWidth="1.300" /><path d="M21 7h3v3h-3z" fill="#111" /></Glyph></SystemButton>
    <AppGroup>
      {apps.map((a, i) => <AppSlot key={i} $state={a.state}><AppIcon>{a.icon}</AppIcon></AppSlot>)}
    </AppGroup>
    <Tray>
      <Glyph w={34} h={30}>
        <defs><linearGradient id="cloud" x1="0" y1="0" x2="0" y2="1"><stop offset="0" stopColor="#f2f9fe" /><stop offset="1" stopColor="#9ccdf0" /></linearGradient></defs>
        <path d="M12.500 0C11 7 8 12 1 14C-1 19 6 23 12 21C19 19 21 9 17 4.500C15 2.500 14 1.500 12.500 0z" fill="#fbbc16" />
        <path d="M10 29A6.500 6.500 0 0 1 10 16.500A8.500 8.500 0 0 1 26 15A7 7 0 0 1 27 29z" fill="url(#cloud)" />
      </Glyph>
      <Label $w={57} $ml={12} $size={20} $ls={-0.6}>26°C</Label>
      <Label $w={94} $size={19.5} $ls={-0.35}>Berawan</Label>
      <Glyph w={19} h={11}><path d="M1 10L9.500 1.500L18 10" stroke="#111" strokeWidth="1.500" /></Glyph>
      <Gap $w={19} />
      <Glyph w={20} h={20}><path d="M1 19C1 9 9 1 19 1M5.500 19C5.500 12 12 5.500 19 5.500M10 19C10 14.500 14.500 10 19 10" stroke="#222" strokeWidth="1.200" /><path d="M14 19A5 5 0 0 1 19 14" stroke="#222" strokeWidth="1.200" /><circle cx="17.500" cy="17.500" r="1.500" fill="#222" /></Glyph>
      <Gap $w={16} />
      <Glyph w={18} h={22}><path d="M1 6H11V16H1zM11 9.500L16.500 6.500V15.500L11 12.500M2 2.500C6 .3 10 .3 14 2.500M2 19.500C6 21.700 10 21.700 14 19.500" stroke="#111" strokeWidth="1.400" /></Glyph>
      <Gap $w={18} />
      <Glyph w={15} h={24}><path d="M2.500 2a2 2 0 0 1 2-2h6a2 2 0 0 1 2 2V17a2 2 0 0 1-2 2h-6a2 2 0 0 1-2-2z" fill="#000" /><path d="M.6 13V18C.6 20 2 21 4 21H11C13 21 14.400 20 14.400 18V13M7.500 21V23.500M4 23.500H11" stroke="#000" strokeWidth="1.200" /></Glyph>
      <Gap $w={18} />
      <Glyph w={22} h={20}><path d="M1 7H4L9 2V18L4 13H1zM12 7C13.500 9 13.500 11 12 13M15 4.500C18 8 18 12 15 15.500M18 2C22.300 7 22.300 13 18 18" stroke="#111" strokeWidth="1.300" /></Glyph>
      <Gap $w={13} />
      <Glyph w={24} h={20}><path d="M9 5H22V17H6V13M22 9H23.500V13H22M2 0V4M6 0V4M.6 4H7.400V8L4 10L.6 8zM4 10V17H6" stroke="#111" strokeWidth="1.300" /></Glyph>
      <Gap $w={13} />
      <Glyph w={33} h={20}><path d="M.7 .7H32.300V19.300H.7z" stroke="#111" strokeWidth="1.300" /><path d="M4 5.500H29M4 10H29" stroke="#111" strokeWidth="1.600" strokeDasharray="1.800 1.800" /><path d="M4 14.500H7M9 14.500H24M26 14.500H29" stroke="#111" strokeWidth="1.500" /></Glyph>
      <Label $w={66} $ml={24} $size={17.5} $ls={-0.9}>0:06</Label>
      <Glyph w={24} h={24}><path d="M0 0H24V19H16L11 24L8 19H0z" fill="#000" /><path d="M5 6H19M5 10H19M5 14H14" stroke="#fff" strokeWidth="1.300" /></Glyph>
      <VLine $h={46} $ml={30} $c="#b4b4c2" $w={2} />
    </Tray>
  </Bar>
);

export default function App() {
  return (
    <Desktop>
      <Global />
      <Workspace>
        <BrowserWindow />
        <UnityWindow />
      </Workspace>
      <Taskbar />
    </Desktop>
  );
}
